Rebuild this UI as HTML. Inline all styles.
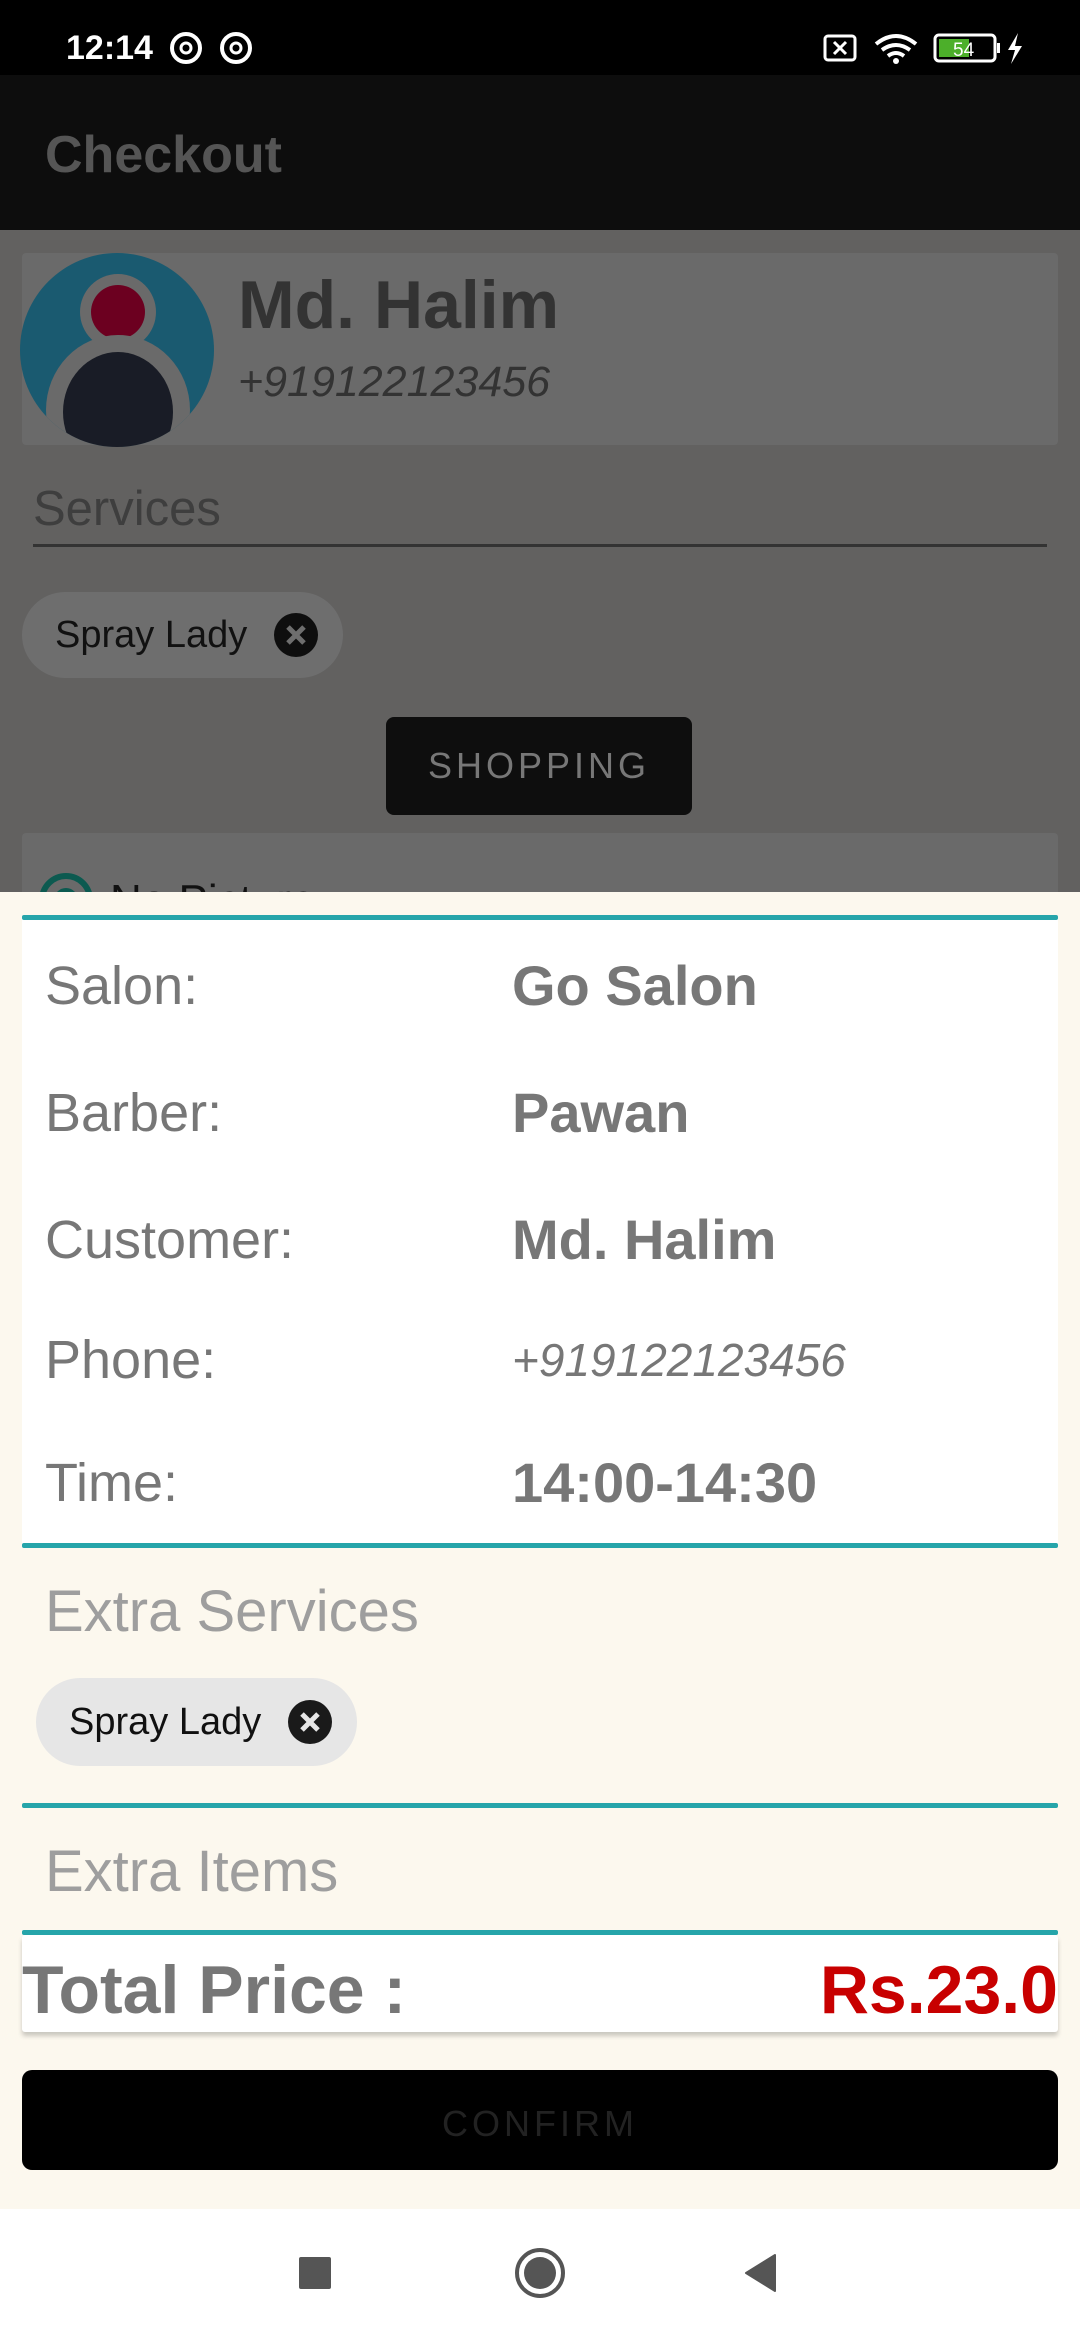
<!DOCTYPE html>
<html><head><meta charset="utf-8"><style>
*{margin:0;padding:0;box-sizing:border-box}
body{width:1080px;height:2340px;position:relative;overflow:hidden;background:#626160;font-family:"Liberation Sans",sans-serif}
.a{position:absolute}
.t{position:absolute;white-space:nowrap;line-height:1;display:flex;align-items:center}
.teal{position:absolute;left:22px;width:1036px;height:5px;background:#26a5aa;border-radius:2px}
</style></head><body>
<div class="a" style="left:0;top:0;width:1080px;height:75px;background:#000"></div>
<div class="t" style="left:66px;top:26px;height:44px;font-size:34px;color:#fff;font-weight:bold">12:14</div>
<svg class="a" style="left:168px;top:30px" width="90" height="36"><circle cx="18" cy="18" r="14" fill="none" stroke="#fff" stroke-width="4"/><circle cx="18" cy="18" r="5" fill="none" stroke="#fff" stroke-width="3"/><circle cx="68" cy="18" r="14" fill="none" stroke="#fff" stroke-width="4"/><circle cx="68" cy="18" r="5" fill="none" stroke="#fff" stroke-width="3"/></svg>
<svg class="a" style="left:820px;top:28px" width="210" height="40"><rect x="5" y="8" width="30" height="24" rx="3" fill="none" stroke="#fff" stroke-width="3"/><path d="M14 14l12 12M26 14l-12 12" stroke="#fff" stroke-width="3"/><path d="M56 16q20-16 40 0M62 22q14-10 28 0M68 28q8-6 16 0" stroke="#fff" stroke-width="4" fill="none"/><circle cx="76" cy="33" r="3" fill="#fff"/><rect x="115" y="7" width="60" height="26" rx="4" fill="none" stroke="#fff" stroke-width="3"/><rect x="119" y="11" width="30" height="18" fill="#4caf2a"/><text x="133" y="28" font-size="19" fill="#fff" font-family="Liberation Sans">54</text><rect x="177" y="15" width="3" height="10" fill="#fff"/><path d="M198 5l-10 17h7l-4 14 11-18h-7z" fill="#fff"/></svg>
<div class="a" style="left:0;top:75px;width:1080px;height:155px;background:#0d0d0d"></div>
<div class="t" style="left:45px;top:125px;height:60px;font-size:52px;color:#555;font-weight:bold">Checkout</div>
<div class="a" style="left:22px;top:253px;width:1036px;height:192px;background:#6a6a6a;border-radius:4px"></div>
<svg class="a" style="left:20px;top:250px" width="200" height="200"><defs><clipPath id="c"><circle cx="97" cy="100" r="97"/></clipPath></defs><circle cx="97" cy="100" r="97" fill="#1a5a70"/><g clip-path="url(#c)"><circle cx="98" cy="62" r="38" fill="#6a6a6a"/><circle cx="98" cy="62" r="27" fill="#6c0020"/><ellipse cx="98" cy="160" rx="72" ry="75" fill="#6a6a6a"/><ellipse cx="98" cy="162" rx="55" ry="60" fill="#191c26"/></g></svg>
<div class="t" style="left:238px;top:270px;height:70px;font-size:68px;color:#333;font-weight:bold">Md. Halim</div>
<div class="t" style="left:238px;top:357px;height:50px;font-size:43px;color:#333;font-style:italic">+919122123456</div>
<div class="t" style="left:33px;top:480px;height:58px;font-size:49px;color:#3e3e3e">Services</div>
<div class="a" style="left:33px;top:544px;width:1014px;height:3px;background:#333"></div>
<div class="a" style="left:22px;top:592px;width:321px;height:86px;background:#6e6e6e;border-radius:43px"></div>
<div class="t" style="left:55px;top:612px;height:46px;font-size:38px;color:#111">Spray Lady</div>
<svg class="a" style="left:273px;top:612px" width="46" height="46"><circle cx="23" cy="23" r="22" fill="#0e0e0e"/><path d="M15 15l16 16M31 15l-16 16" stroke="#6e6e6e" stroke-width="5"/></svg>
<div class="a" style="left:386px;top:717px;width:306px;height:98px;background:#0e0e0e;border-radius:8px"></div>
<div class="t" style="left:386px;top:717px;width:306px;height:98px;justify-content:center;font-size:36px;color:#777;letter-spacing:4px">SHOPPING</div>
<div class="a" style="left:22px;top:833px;width:1036px;height:80px;background:#6a6a6a;border-radius:4px"></div>
<svg class="a" style="left:36px;top:870px" width="60" height="30"><circle cx="30" cy="30" r="24" fill="none" stroke="#0c5a50" stroke-width="6"/><circle cx="30" cy="30" r="12" fill="#0c5a50"/></svg>
<div class="t" style="left:110px;top:876px;height:50px;font-size:44px;color:#111">No Picture</div>
<div class="a" style="left:0;top:892px;width:1080px;height:1317px;background:#fcf8ee"></div>
<div class="a" style="left:22px;top:917px;width:1036px;height:630px;background:#fff"></div>
<div class="teal" style="top:915px"></div>
<div class="t" style="left:45px;top:956px;height:60px;font-size:54px;color:#777">Salon:</div>
<div class="t" style="left:512px;top:956px;height:60px;font-size:56px;color:#777;font-weight:bold">Go Salon</div>
<div class="t" style="left:45px;top:1083px;height:60px;font-size:54px;color:#777">Barber:</div>
<div class="t" style="left:512px;top:1083px;height:60px;font-size:56px;color:#777;font-weight:bold">Pawan</div>
<div class="t" style="left:45px;top:1210px;height:60px;font-size:54px;color:#777">Customer:</div>
<div class="t" style="left:512px;top:1210px;height:60px;font-size:56px;color:#777;font-weight:bold">Md. Halim</div>
<div class="t" style="left:45px;top:1330px;height:60px;font-size:54px;color:#777">Phone:</div>
<div class="t" style="left:512px;top:1330px;height:60px;font-size:46px;color:#777;font-style:italic">+919122123456</div>
<div class="t" style="left:45px;top:1453px;height:60px;font-size:54px;color:#777">Time:</div>
<div class="t" style="left:512px;top:1453px;height:60px;font-size:56px;color:#777;font-weight:bold">14:00-14:30</div>
<div class="teal" style="top:1543px"></div>
<div class="t" style="left:45px;top:1580px;height:64px;font-size:58px;color:#9e9e9e">Extra Services</div>
<div class="a" style="left:36px;top:1678px;width:321px;height:88px;background:#e6e6e6;border-radius:44px"></div>
<div class="t" style="left:69px;top:1699px;height:46px;font-size:38px;color:#111">Spray Lady</div>
<svg class="a" style="left:287px;top:1699px" width="46" height="46"><circle cx="23" cy="23" r="22" fill="#1a1a1a"/><path d="M15 15l16 16M31 15l-16 16" stroke="#e6e6e6" stroke-width="5"/></svg>
<div class="teal" style="top:1803px"></div>
<div class="t" style="left:45px;top:1840px;height:64px;font-size:58px;color:#9e9e9e">Extra Items</div>
<div class="a" style="left:22px;top:1935px;width:1036px;height:97px;background:#fff;box-shadow:0 4px 5px rgba(0,0,0,.2);border-radius:3px"></div>
<div class="teal" style="top:1930px"></div>
<div class="t" style="left:22px;top:1952px;height:76px;font-size:68px;color:#777;font-weight:bold">Total Price :</div>
<div class="t" style="right:22px;top:1952px;height:76px;font-size:68px;color:#c80000;font-weight:bold">Rs.23.0</div>
<div class="a" style="left:22px;top:2070px;width:1036px;height:100px;background:#000;border-radius:10px"></div>
<div class="t" style="left:22px;top:2074px;width:1036px;height:100px;justify-content:center;font-size:36px;color:#222;letter-spacing:4px">CONFIRM</div>
<div class="a" style="left:0;top:2209px;width:1080px;height:131px;background:#fff"></div>
<div class="a" style="left:299px;top:2257px;width:32px;height:32px;background:#555;border-radius:2px"></div>
<svg class="a" style="left:514px;top:2247px" width="52" height="52"><circle cx="26" cy="26" r="23" fill="none" stroke="#555" stroke-width="4"/><circle cx="26" cy="26" r="16" fill="#555"/></svg>
<svg class="a" style="left:742px;top:2253px" width="40" height="40"><path d="M33 2v36L4 20z" fill="#555" stroke="#555" stroke-width="2" stroke-linejoin="round"/></svg>
</body></html>
